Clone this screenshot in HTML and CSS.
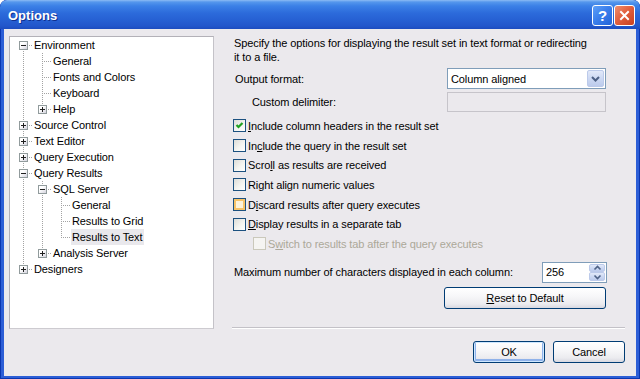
FILE: index.html
```html
<!DOCTYPE html>
<html lang="en">
<head>
    <meta charset="UTF-8">
    <title>Options</title>
    <link rel="stylesheet" href="styles.css">
</head>
<body>
    <div class="window">
        <header class="titlebar">
            <span class="title">Options</span>
            <div class="caption-btns">
                <button class="cap-btn cap-help">?</button>
                <button class="cap-btn cap-close">
                    <svg width="11" height="11" viewBox="0 0 11 11">
                        <path d="M2 2 L9 9 M9 2 L2 9" stroke="#fff" stroke-width="2" stroke-linecap="square"></path>
                    </svg>
                </button>
            </div>
        </header>

        <div class="client">
            <div class="tree">
                <div class="node"><span class="guide first"><i class="exp"></i></span><span class="label">Environment</span></div>
                <div class="node"><span class="guide pipe"></span><span class="guide tee"></span><span class="label">General</span></div>
                <div class="node"><span class="guide pipe"></span><span class="guide tee"></span><span class="label">Fonts and Colors</span></div>
                <div class="node"><span class="guide pipe"></span><span class="guide tee"></span><span class="label">Keyboard</span></div>
                <div class="node"><span class="guide pipe"></span><span class="guide end"><i class="exp plus"></i></span><span class="label">Help</span></div>
                <div class="node"><span class="guide tee"><i class="exp plus"></i></span><span class="label">Source Control</span></div>
                <div class="node"><span class="guide tee"><i class="exp plus"></i></span><span class="label">Text Editor</span></div>
                <div class="node"><span class="guide tee"><i class="exp plus"></i></span><span class="label">Query Execution</span></div>
                <div class="node"><span class="guide tee"><i class="exp"></i></span><span class="label">Query Results</span></div>
                <div class="node"><span class="guide pipe"></span><span class="guide tee"><i class="exp"></i></span><span class="label">SQL Server</span></div>
                <div class="node"><span class="guide pipe"></span><span class="guide pipe"></span><span class="guide tee"></span><span class="label">General</span></div>
                <div class="node"><span class="guide pipe"></span><span class="guide pipe"></span><span class="guide tee"></span><span class="label">Results to Grid</span></div>
                <div class="node"><span class="guide pipe"></span><span class="guide pipe"></span><span class="guide end"></span><span class="label selected">Results to Text</span></div>
                <div class="node"><span class="guide pipe"></span><span class="guide end"><i class="exp plus"></i></span><span class="label">Analysis Server</span></div>
                <div class="node"><span class="guide end"><i class="exp plus"></i></span><span class="label">Designers</span></div>
            </div>

            <div class="pane">
                <p class="desc">Specify the options for displaying the result set in text format or redirecting<br>it to a file.</p>

                <div class="field">
                    <label class="field-label">Output format:</label>
                    <div class="combo">
                        <span class="combo-text">Column aligned</span>
                        <span class="combo-btn">
                            <svg width="15" height="15" viewBox="0 0 15 15">
                                <polyline points="4,6 7.5,9.5 11,6" fill="none" stroke="#4d6185" stroke-width="2"></polyline>
                            </svg>
                        </span>
                    </div>
                </div>

                <div class="field field-sub">
                    <label class="field-label">Custom delimiter:</label>
                    <div class="textbox is-disabled"></div>
                </div>

                <ul class="checks">
                    <li class="check is-checked">
                        <span class="box">
                            <svg width="11" height="11" viewBox="0 0 11 11">
                                <polyline points="2.5,5 4.5,7 8.5,3" fill="none" stroke="#21a121" stroke-width="2.2"></polyline>
                            </svg>
                        </span>
                        <span><u>I</u>nclude column headers in the result set</span>
                    </li>
                    <li class="check"><span class="box"></span><span>In<u>c</u>lude the query in the result set</span></li>
                    <li class="check"><span class="box"></span><span>Scro<u>l</u>l as results are received</span></li>
                    <li class="check"><span class="box"></span><span>Right align numeric values</span></li>
                    <li class="check is-hover"><span class="box"></span><span>D<u>i</u>scard results after query executes</span></li>
                    <li class="check"><span class="box"></span><span><u>D</u>isplay results in a separate tab</span></li>
                    <li class="check check-sub is-disabled"><span class="box"></span><span>S<u>w</u>itch to results tab after the query executes</span></li>
                </ul>

                <div class="field field-max">
                    <label class="field-label">Maximum number of characters displayed in each column:</label>
                    <div class="spin">
                        <span class="spin-text">256</span>
                        <span class="spin-btns">
                            <span class="spin-btn">
                                <svg width="9" height="6" viewBox="0 0 9 6"><polyline points="1.5,4.5 4.5,1.5 7.5,4.5" fill="none" stroke="#4d6185" stroke-width="1.6"></polyline></svg>
                            </span>
                            <span class="spin-btn">
                                <svg width="9" height="6" viewBox="0 0 9 6"><polyline points="1.5,1.5 4.5,4.5 7.5,1.5" fill="none" stroke="#4d6185" stroke-width="1.6"></polyline></svg>
                            </span>
                        </span>
                    </div>
                </div>

                <div class="reset-row">
                    <button class="btn btn-reset"><u>R</u>eset to Default</button>
                </div>

                <hr class="sep">

                <div class="actions">
                    <button class="btn btn-default">OK</button>
                    <button class="btn">Cancel</button>
                </div>
            </div>
        </div>
    </div>
</body>
</html>
```

FILE: styles.css
```css
:root {
    --face: #ebe9ed;
    --frame: #2c5ed6;
    --frame-dark: #0b36b0;
    --field-border: #7f9db9;
    --tree-line: #a3a3a3;
    --text: #000000;
    --text-disabled: #aca899;
}

* {
    box-sizing: border-box;
    margin: 0;
    padding: 0;
}

body {
    font-family: Tahoma, "Liberation Sans", Arial, sans-serif;
    font-size: 11px;
    letter-spacing: -0.1px;
    color: var(--text);
    background: #ffffff;
}

.window {
    width: 640px;
    height: 379px;
    display: flex;
    flex-direction: column;
    background: var(--frame);
    border-radius: 7px 7px 0 0;
    box-shadow: inset 1px 0 var(--frame-dark), inset -1px 0 var(--frame-dark), inset 0 -1px var(--frame-dark);
    padding: 0 4px 3px 4px;
    overflow: hidden;
}

/* title bar */
.titlebar {
    height: 29px;
    margin: 0 -4px;
    padding: 0 5px 0 8px;
    display: flex;
    align-items: center;
    justify-content: space-between;
    border-radius: 7px 7px 0 0;
    background: linear-gradient(to bottom, #8cbcf4 0px, #5597ec 2px, #3b80e6 6px, #2c6bdb 13px, #2660d3 20px, #2256cb 26px, #1c4cbf 29px);
}

.title {
    color: #ffffff;
    font-family: "Liberation Sans", Arial, sans-serif;
    font-size: 13px;
    font-weight: bold;
    letter-spacing: 0;
    text-shadow: 1px 1px #0f2f8f;
    margin-top: 1px;
}

.caption-btns {
    display: flex;
    gap: 1px;
    margin-top: 1px;
}

.cap-btn {
    width: 21px;
    height: 21px;
    border: 1px solid #ffffff;
    border-radius: 3px;
    display: flex;
    align-items: center;
    justify-content: center;
    color: #ffffff;
    font-family: "Liberation Sans", Arial, sans-serif;
    font-weight: bold;
    font-size: 15px;
}

.cap-help {
    background: linear-gradient(135deg, #5ea0f8 0%, #3b7fec 45%, #2463d8 100%);
}

.cap-close {
    background: linear-gradient(135deg, #ef8f6e 0%, #e2603f 45%, #c9401f 100%);
}

/* client area */
.client {
    flex: 1;
    display: flex;
    background: var(--face);
    padding: 7px 11px 0 5px;
}

.tree {
    width: 205px;
    height: 293px;
    flex: none;
    background: #ffffff;
    border: 1px solid #b3b1b8;
    border-right-color: #c4c2c8;
    border-bottom-color: #cdcbd0;
    padding-left: 4px;
}

.node {
    display: flex;
    height: 16px;
    line-height: 16px;
}

.guide {
    position: relative;
    width: 19px;
    height: 16px;
    flex: none;
}

.guide::before,
.guide::after {
    content: '';
    position: absolute;
}

.pipe::before,
.tee::before,
.first::before,
.end::before {
    left: 9px;
    width: 1px;
    background: repeating-linear-gradient(to bottom, var(--tree-line) 0 1px, transparent 1px 2px);
}

.pipe::before,
.tee::before {
    top: 0;
    bottom: 0;
}

.first::before {
    top: 8px;
    bottom: 0;
}

.end::before {
    top: 0;
    height: 9px;
}

.tee::after,
.first::after,
.end::after {
    left: 10px;
    right: 0;
    top: 8px;
    height: 1px;
    background: repeating-linear-gradient(to right, transparent 0 1px, var(--tree-line) 1px 2px);
}

.exp {
    position: absolute;
    left: 5px;
    top: 4px;
    width: 9px;
    height: 9px;
    border: 1px solid #919b9c;
    background: linear-gradient(135deg, #ffffff 35%, #d4d3de 100%);
    z-index: 1;
}

.exp::before,
.exp::after {
    content: '';
    position: absolute;
    background: #1f1f1f;
}

.exp::before {
    left: 1px;
    top: 3px;
    width: 5px;
    height: 1px;
}

.exp.plus::after {
    left: 3px;
    top: 1px;
    width: 1px;
    height: 5px;
}

.label {
    padding: 0 2px 0 1px;
    white-space: nowrap;
}

.label.selected {
    background: #e9e8ec;
}

/* options pane */
.pane {
    flex: 1;
    margin-left: 18px;
    display: flex;
    flex-direction: column;
}

.desc {
    line-height: 14px;
    padding-left: 2px;
    white-space: nowrap;
}

.field {
    display: flex;
    align-items: center;
    justify-content: space-between;
    margin-right: 19px;
}

.field-label {
    padding-left: 3px;
}

.desc + .field {
    margin-top: 4px;
    height: 21px;
}

.field-sub {
    margin-top: 3px;
    height: 20px;
}

.field-sub .field-label {
    padding-left: 20px;
}

.combo {
    width: 159px;
    height: 21px;
    background: #ffffff;
    border: 1px solid var(--field-border);
    display: flex;
    align-items: center;
    justify-content: space-between;
    padding: 1px;
}

.combo-text {
    padding-left: 2px;
}

.combo-btn,
.spin-btn {
    display: flex;
    align-items: center;
    justify-content: center;
    border: 1px solid #bccaea;
    border-radius: 2px;
    background: linear-gradient(to bottom, #e2e9f9 0%, #cdd9f3 50%, #bccbec 100%);
}

.combo-btn {
    width: 17px;
    height: 17px;
}

.textbox {
    width: 159px;
    height: 20px;
    border: 1px solid #c6c4ca;
}

.textbox.is-disabled {
    background: var(--face);
}

.checks {
    list-style: none;
    margin-top: 4px;
}

.check {
    display: flex;
    align-items: center;
    height: 19.7px;
    padding-left: 1px;
    white-space: nowrap;
}

.check .box {
    width: 13px;
    height: 13px;
    flex: none;
    margin-right: 2px;
    border: 1px solid #1c5180;
    background: linear-gradient(135deg, #dcdcd7 0%, #f4f4f0 55%, #ffffff 100%);
    display: flex;
    align-items: center;
    justify-content: center;
}

.check.is-hover .box {
    background: #fdf3da;
    box-shadow: inset 0 0 0 2px #f7c46a;
}

.check-sub {
    padding-left: 21px;
}

.check.is-disabled {
    color: var(--text-disabled);
}

.check.is-disabled .box {
    border-color: #cac8bb;
    background: #f5f4f2;
}

.field-max {
    margin-top: 8px;
    margin-right: 18px;
    height: 21px;
}

.field-max .field-label {
    padding-left: 2px;
}

.spin {
    width: 65px;
    height: 21px;
    background: #ffffff;
    border: 1px solid var(--field-border);
    display: flex;
    justify-content: space-between;
    align-items: center;
    padding: 1px;
}

.spin-text {
    padding-left: 2px;
}

.spin-btns {
    display: flex;
    flex-direction: column;
    height: 17px;
    width: 16px;
}

.spin-btn {
    flex: 1;
}

.reset-row {
    display: flex;
    justify-content: flex-end;
    margin: 4px 19px 0 0;
}

.btn {
    height: 22px;
    width: 72px;
    font-family: inherit;
    font-size: 11px;
    letter-spacing: inherit;
    color: var(--text);
    border: 1px solid #003c74;
    border-radius: 3px;
    background: linear-gradient(to bottom, #ffffff 0%, #f7f7f9 40%, #ebebef 80%, #d8d8e0 100%);
}

.btn-reset {
    width: 162px;
}

.btn-default {
    box-shadow: inset 0 0 0 1px #cee7ff, inset 0 -1px 0 2px #8fb2ea;
}

.sep {
    margin-top: 18px;
    border: none;
    border-top: 1px solid #c3c1c7;
    border-bottom: 1px solid #ffffff;
}

.actions {
    display: flex;
    justify-content: flex-end;
    gap: 8px;
    margin-top: 12px;
}
```
